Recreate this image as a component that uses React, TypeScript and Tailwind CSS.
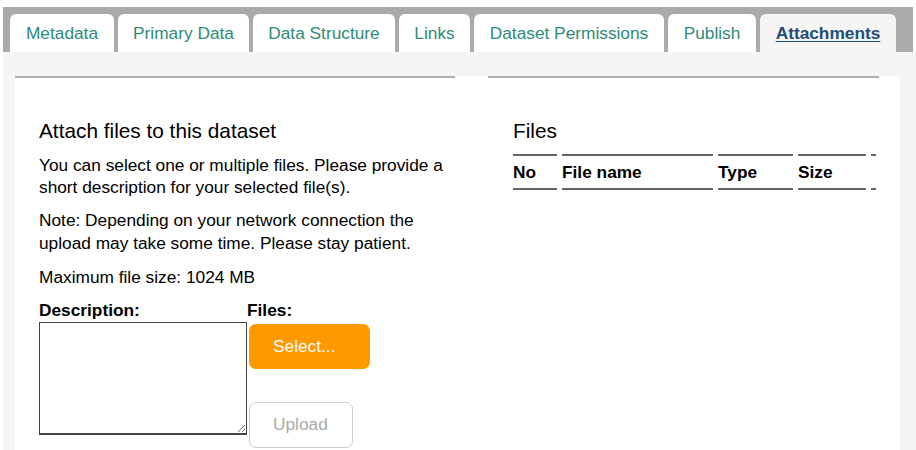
import React from 'react';

const tabs = [
  { label: 'Metadata', w: 'w-[104px]' },
  { label: 'Primary Data', w: 'w-[131px]' },
  { label: 'Data Structure', w: 'w-[142px]' },
  { label: 'Links', w: 'w-[71px]' },
  { label: 'Dataset Permissions', w: 'w-[190px]' },
  { label: 'Publish', w: 'w-[88px]' },
];

const columns = [
  { label: 'No', w: 'w-[44px]' },
  { label: 'File name', w: 'w-[151px]' },
  { label: 'Type', w: 'w-[75px]' },
  { label: 'Size', w: 'w-[68px]' },
  { label: '', w: 'w-[5px]' },
];

export default function App() {
  return (
    <div
      className="w-[916px] h-[450px] overflow-hidden bg-white pt-[7px] pl-[3px] text-black"
      style={{ fontFamily: '"Liberation Sans", Arial, sans-serif' }}
    >
      {/* Tab strip */}
      <div className="mr-[3px] flex h-[45px] items-end gap-[4px] bg-[#aaaaaa] pl-[7px]">
        {tabs.map((t) => (
          <div
            key={t.label}
            className={`${t.w} flex h-[38px] items-center justify-center rounded-t-[6px] bg-white pt-[1px] text-[17.3px] text-[#2e8b78]`}
          >
            {t.label}
          </div>
        ))}
        <div className="flex h-[38px] w-[136px] items-center justify-center rounded-t-[6px] bg-[#f5f5f5] pt-[1px] text-[17.3px] font-bold text-[#1f4e79] underline underline-offset-2">
          Attachments
        </div>
      </div>

      {/* Content */}
      <div className="h-full bg-[#f5f5f5] pl-[12px] pt-[24px] pr-[16px]">
        <div className="flex h-full gap-[33px] bg-white">
          {/* Left: upload form */}
          <div className="w-[440px] border-t-2 border-[#b0b0b0] pl-[24px]">
            <h3 className="mt-[41px] text-[20.8px] leading-[24px]">Attach files to this dataset</h3>
            <p className="mt-[11px] text-[17.3px] leading-[22px]">
              You can select one or multiple files. Please provide a short description for your selected file(s).
            </p>
            <p className="mt-[11px] text-[17.3px] leading-[23px]">
              Note: Depending on your network connection the upload may take some time. Please stay patient.
            </p>
            <p className="mt-[11px] text-[17.3px] leading-[22px]">Maximum file size: 1024 MB</p>

            <div className="mt-[11px] flex">
              <div className="w-[208px]">
                <div className="text-[17.3px] font-bold leading-[22px]">Description:</div>
                <textarea className="mt-[1px] block h-[113px] w-[208px] border border-b-2 border-[#444] bg-white" />
              </div>
              <div className="flex flex-col">
                <div className="text-[17.3px] font-bold leading-[22px]">Files:</div>
                <button className="ml-[2px] mt-[3px] h-[45px] w-[121px] rounded-[7px] bg-[#ff9900] pl-[24px] text-left text-[17.3px] text-white">
                  Select...
                </button>
                <button className="ml-[2px] mt-[33px] h-[46px] w-[104px] rounded-[7px] border border-[#cccccc] bg-white pl-[23px] text-left text-[17.3px] text-[#aaaaaa]">
                  Upload
                </button>
              </div>
            </div>
          </div>

          {/* Right: file list */}
          <div className="w-[391px]">
            <div className="border-t-2 border-[#b0b0b0] pl-[25px]">
              <h3 className="mt-[41px] text-[20.8px] leading-[24px]">Files</h3>
              <div className="mt-[11px] flex gap-[5px]">
                {columns.map((c, i) => (
                  <div
                    key={i}
                    className={`${c.w} flex h-[36px] items-center border-y-2 border-[#666] pt-[1px] text-[17.3px] font-bold`}
                  >
                    {c.label}
                  </div>
                ))}
              </div>
            </div>
          </div>
        </div>
      </div>
    </div>
  );
}
